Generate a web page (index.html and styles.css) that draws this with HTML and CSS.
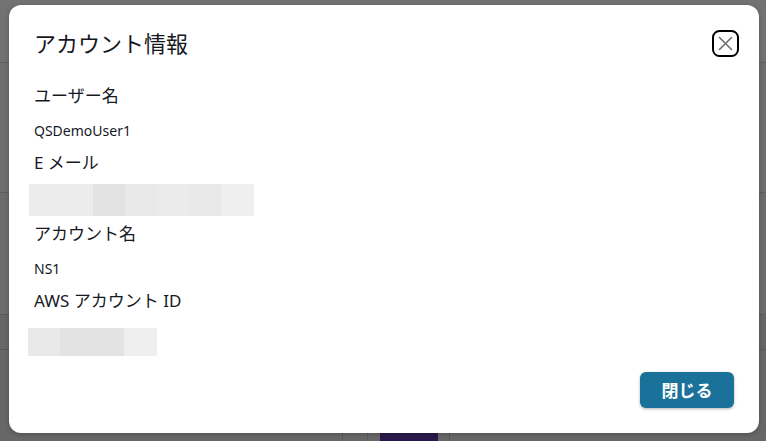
FILE: index.html
```html
<!DOCTYPE html>
<html lang="ja">
<head>
<meta charset="utf-8">
<title>アカウント情報</title>
<link rel="stylesheet" href="styles.css">
</head>
<body>
<div class="dialog" role="dialog" aria-labelledby="dlg-title">
  <header class="dialog-header">
    <h1 id="dlg-title" class="dialog-title">アカウント情報</h1>
    <button class="close-btn" aria-label="閉じる">
      <svg viewBox="0 0 27 27" width="27" height="27" aria-hidden="true">
        <rect x="1" y="1" width="25" height="25" rx="6.5" ry="6.5" fill="none" stroke="#000" stroke-width="2"/>
        <path d="M7.5 7.5 L19.5 19.5 M19.5 7.5 L7.5 19.5" stroke="#6f6f6f" stroke-width="1.6" stroke-linecap="round"/>
      </svg>
    </button>
  </header>
  <div class="dialog-body">
    <div class="field">
      <div class="label">ユーザー名</div>
      <div class="value">QSDemoUser1</div>
    </div>
    <div class="field">
      <div class="label">E メール</div>
      <div class="redact redact-email">
        <span class="cell c1"></span><span class="cell c1"></span><span class="cell c2"></span><span class="cell c3"></span><span class="cell c4"></span><span class="cell c3"></span><span class="cell c5"></span>
      </div>
    </div>
    <div class="field">
      <div class="label">アカウント名</div>
      <div class="value">NS1</div>
    </div>
    <div class="field">
      <div class="label">AWS アカウント ID</div>
      <div class="redact redact-id">
        <span class="cell c3"></span><span class="cell c2"></span><span class="cell c2"></span><span class="cell c5"></span>
      </div>
    </div>
  </div>
  <footer class="dialog-footer">
    <button class="primary-btn">閉じる</button>
  </footer>
</div>
</body>
</html>
```

FILE: styles.css
```css
* { box-sizing: border-box; }

html, body {
  margin: 0;
  padding: 0;
}

body {
  width: 766px;
  height: 441px;
  overflow: hidden;
  font-family: "Noto Sans", "Noto Sans CJK JP", sans-serif;
  color: #16191f;
  background-color: #6c6c6c;
  background-image:
    linear-gradient(#2a1a4c, #2a1a4c),
    linear-gradient(#5a5a5a, #5a5a5a),
    linear-gradient(#5a5a5a, #5a5a5a),
    linear-gradient(#5a5a5a, #5a5a5a),
    linear-gradient(to bottom,
      #727272 0, #727272 62px,
      #5e5e5e 62px, #5e5e5e 63px,
      #6e6e6e 63px, #6e6e6e 192px,
      #5e5e5e 192px, #5e5e5e 193px,
      #6c6c6c 193px, #6c6c6c 314px,
      #5a5a5a 314px, #5a5a5a 315px,
      #666666 315px, #666666 349px,
      #585858 349px, #585858 350px,
      #676767 350px, #676767 100%);
  background-repeat: no-repeat;
  background-position:
    380px 428px,
    342px 428px,
    367px 428px,
    449px 428px,
    0 0;
  background-size:
    58px 13px,
    1px 13px,
    1px 13px,
    1px 13px,
    100% 100%;
  padding-top: 5px;
  padding-left: 9px;
}

.dialog {
  width: 750px;
  height: 428px;
  background: #ffffff;
  border-radius: 12px;
  display: flex;
  flex-direction: column;
  box-shadow: 0 1px 4px rgba(0, 0, 0, 0.25);
}

.dialog-header {
  height: 78px;
  display: flex;
  align-items: center;
  justify-content: space-between;
  padding: 0 20px 0 25px;
}

.dialog-title {
  margin: 0 0 4px;
  font-family: "Noto Sans CJK JP", "Noto Sans", sans-serif;
  font-size: 22px;
  line-height: 30px;
  font-weight: 400;
  color: #16191f;
}

.close-btn {
  width: 27px;
  height: 27px;
  padding: 0;
  margin: 0 0 1px;
  border: 0;
  background: transparent;
  display: flex;
  cursor: pointer;
}

.dialog-body {
  flex: 1;
  padding: 0 25px;
  display: flex;
  flex-direction: column;
  gap: 8px;
}

.field {
  display: flex;
  flex-direction: column;
}

.label {
  font-size: 17px;
  line-height: 26px;
  color: #16191f;
}

.value {
  margin-top: 11px;
  font-size: 14px;
  line-height: 22px;
  color: #16191f;
}

.redact {
  display: flex;
}

.redact-email {
  margin-top: 8px;
  margin-left: -5px;
  height: 32px;
  margin-bottom: -3px;
}

.redact-id {
  margin-top: 14px;
  margin-left: -6px;
  height: 28px;
}

.cell {
  width: 32px;
  height: 100%;
  display: block;
}

.redact-email .cell:last-child { width: 33px; }
.redact-id .cell:last-child { width: 33px; }

.c1 { background: #ececec; }
.c2 { background: #e3e3e3; }
.c3 { background: #e9e9e9; }
.c4 { background: #ebebeb; }
.c5 { background: #efefef; }

.dialog-footer {
  display: flex;
  justify-content: flex-end;
  padding: 0 25px 25px;
}

.primary-btn {
  width: 94px;
  height: 36px;
  border: 0;
  border-radius: 6px;
  background: #1a7199;
  color: #ffffff;
  font-family: "Noto Sans CJK JP", "Noto Sans", sans-serif;
  font-size: 17px;
  font-weight: 700;
  line-height: 36px;
  padding: 0;
  box-shadow: 0 1px 3px rgba(0, 0, 0, 0.3);
  cursor: pointer;
}
```
